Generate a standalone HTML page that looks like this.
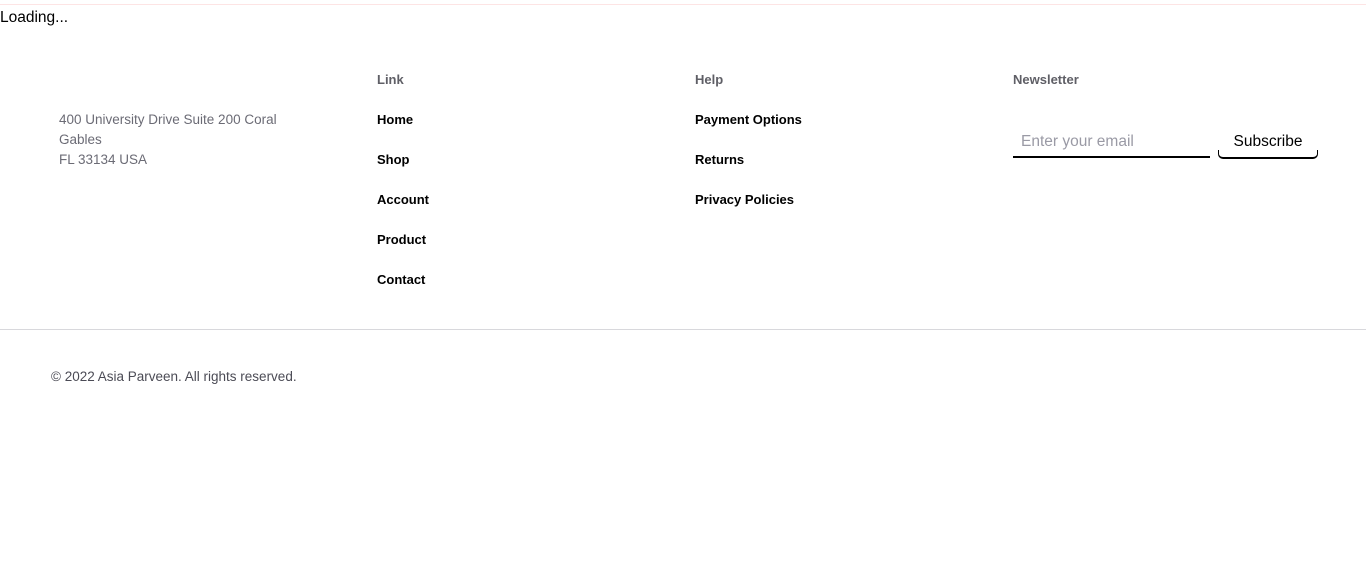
<!DOCTYPE html>
<html><head><meta charset="utf-8"><style>
*{margin:0;padding:0;box-sizing:border-box}
body{width:1366px;height:579px;background:#fff;font-family:"Liberation Sans",sans-serif;position:relative;overflow:hidden}
.a{position:absolute;white-space:nowrap;line-height:20px}
.h{font-size:13px;font-weight:bold;color:#5f5f66}
.l{font-size:13px;font-weight:bold;color:#000}
.g{font-size:13.5px;color:#6b6b75}
</style></head><body>
<div style="position:absolute;left:0;top:4px;width:1366px;height:1px;background:#fde4e4"></div>
<div class="a" style="left:0;top:8px;font-size:15.5px;color:#000">Loading...</div>
<div class="a g" style="left:59px;top:110px">400 University Drive Suite 200 Coral</div>
<div class="a g" style="left:59px;top:130px">Gables</div>
<div class="a g" style="left:59px;top:150px">FL 33134 USA</div>
<div class="a h" style="left:377px;top:70px">Link</div>
<div class="a l" style="left:377px;top:110px">Home</div>
<div class="a l" style="left:377px;top:150px">Shop</div>
<div class="a l" style="left:377px;top:190px">Account</div>
<div class="a l" style="left:377px;top:230px">Product</div>
<div class="a l" style="left:377px;top:270px">Contact</div>
<div class="a h" style="left:695px;top:70px">Help</div>
<div class="a l" style="left:695px;top:110px">Payment Options</div>
<div class="a l" style="left:695px;top:150px">Returns</div>
<div class="a l" style="left:695px;top:190px">Privacy Policies</div>
<div class="a h" style="left:1013px;top:70px">Newsletter</div>
<div class="a" style="left:1021px;top:132px;font-size:15.5px;color:#9a9aa5">Enter your email</div>
<div style="position:absolute;left:1013px;top:156px;width:197px;height:2px;background:#000"></div>
<div class="a" style="left:1218px;top:132px;width:100px;text-align:center;font-size:15.5px;color:#000">Subscribe</div>
<div style="position:absolute;left:1218px;top:150px;width:100px;height:9px;border:1px solid #000;border-top:none;border-radius:0 0 5px 5px;border-bottom-width:2px"></div>
<div style="position:absolute;left:0;top:329px;width:1366px;height:1px;background:#d8d8dc"></div>
<div class="a" style="left:51px;top:367px;font-size:13.5px;color:#4b4b55">© 2022 Asia Parveen. All rights reserved.</div>
</body></html>
